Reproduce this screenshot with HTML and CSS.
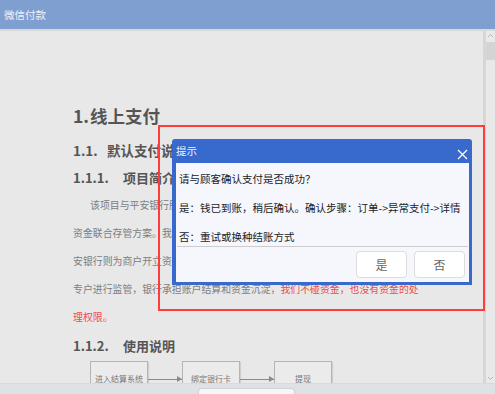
FILE: index.html
```html
<!DOCTYPE html>
<html lang="zh-CN">
<head>
  <meta charset="UTF-8">
  <meta name="viewport" content="width=device-width, initial-scale=1.0">
  <title>微信付款</title>
  <link rel="stylesheet" href="styles.css">
</head>
<body>
  <div class="topbar">微信付款</div>

  <!--DOCUMENT AREA-->
  <div class="main">
    <div class="content">
      <h1 class="title-1"><span class="num num-1">1.</span>线上支付</h1>
      <h2 class="title-2"><span class="num num-2">1.1.</span>默认支付说明</h2>
      <h3 class="title-3"><span class="num num-3">1.1.1.</span>项目简介</h3>
      <p class="para">
        <span class="indent">该项目与平安银行股份有限公司合作，采用平安银行提供的商户</span><br>
        资金联合存管方案。我们只负责与银行之间的接口对接与数据传输，平<br>
        安银行则为商户开立资金存管账户，商户资金存放在银行的资金存管<br>
        专户进行监管，银行承担账户结算和资金沉淀，<span class="warn">我们不碰资金，也没有资金的处</span><br>
        <span class="warn">理权限。</span>
      </p>
      <h3 class="title-3"><span class="num num-3">1.1.2.</span>使用说明</h3>

      <div class="flow">
        <div class="flow-box">进入结算系统</div>
        <div class="flow-arrow"></div>
        <div class="flow-box">绑定银行卡</div>
        <div class="flow-arrow"></div>
        <div class="flow-box">提现</div>
      </div>
    </div>

    <div class="scrollbar">
      <svg class="scroll-arrow" width="7" height="5" viewBox="0 0 7 5"><polyline points="1,4 3.5,1.5 6,4" fill="none" stroke="#b5b5b5" stroke-width="1"/></svg>
      <div class="scroll-thumb"></div>
      <div class="scroll-rest"></div>
      <svg class="scroll-arrow" width="7" height="5" viewBox="0 0 7 5"><polyline points="1,1 3.5,3.5 6,1" fill="none" stroke="#b5b5b5" stroke-width="1"/></svg>
    </div>
  </div>

  <div class="bottombar">
    <div class="bottom-tab"></div>
  </div>

  <!--RED HIGHLIGHT FRAME-->
  <div class="mark"></div>

  <!--CONFIRM DIALOG-->
  <div class="dialog">
    <div class="dialog-head">提示</div>
    <svg class="dialog-close" width="11" height="11" viewBox="0 0 11 11">
      <path d="M1 1 L10 10 M10 1 L1 10" stroke="#ffffff" stroke-width="1.3" fill="none"/>
    </svg>
    <div class="dialog-body">
      <div class="dialog-text">
        <p>请与顾客确认支付是否成功？</p>
        <p>是：钱已到账，稍后确认。确认步骤：订单-&gt;异常支付-&gt;详情</p>
        <p>否：重试或换种结账方式</p>
      </div>
      <div class="dialog-foot">
        <button class="dialog-btn">是</button>
        <button class="dialog-btn">否</button>
      </div>
    </div>
  </div>
</body>
</html>
```

FILE: styles.css
```css
body {
  margin: 0;
  width: 495px;
  height: 394px;
  overflow: hidden;
  position: relative;
  background-color: #e8e8e8;
  font-family: "Noto Sans CJK SC", "Noto Sans", sans-serif;
}
.topbar {
  height: 29px;
  line-height: 29px;
  padding-left: 4px;
  font-size: 10.5px;
  color: #eef1f8;
  background-color: #809fd1;
  border-bottom: 2px solid #d9d9d9;
}
.main {
  display: flex;
  height: 352px;
  overflow: hidden;
}
.content {
  flex: 1;
  padding: 72px 0 0 73px;
  background-color: #e8e8e8;
  border-right: 3px solid #d6d6d6;
}
.title-1 {
  margin: 0;
  font-size: 17.5px;
  line-height: 26px;
  color: #555555;
}
.title-2 {
  margin: 8px 0 0;
  font-size: 13.5px;
  line-height: 26px;
  color: #555555;
}
.title-3 {
  margin: 2px 0 0;
  font-size: 13px;
  line-height: 26px;
  color: #555555;
}
.num {
  display: inline-block;
}
.num-1 {
  width: 17px;
}
.num-2 {
  width: 34px;
}
.num-3 {
  width: 50px;
}
.para {
  margin: 0;
  font-size: 9.9px;
  line-height: 28px;
  color: #7d7d7d;
  white-space: nowrap;
}
.indent {
  padding-left: 17px;
}
.warn {
  color: #f0494b;
}
.flow {
  display: flex;
  align-items: flex-start;
  margin: 2px 0 0 17px;
}
.flow-box {
  width: 56px;
  height: 38px;
  line-height: 34px;
  text-align: center;
  font-size: 8px;
  color: #777777;
  background-color: #ebebeb;
  border: 1px solid #b4b4b4;
  box-shadow: 1px 1px 1px #cfcfcf;
}
.flow-arrow {
  position: relative;
  width: 34px;
  height: 1px;
  margin-top: 18px;
  background-color: #8a8a8a;
}
.flow-arrow::after {
  content: "";
  position: absolute;
  right: 0;
  top: -3px;
  border-left: 5px solid #8a8a8a;
  border-top: 3.5px solid transparent;
  border-bottom: 3.5px solid transparent;
}
.scrollbar {
  width: 9px;
  display: flex;
  flex-direction: column;
  align-items: center;
  background-color: #e9e9e9;
}
.scroll-arrow {
  margin: 2px 0;
}
.scroll-thumb {
  width: 9px;
  height: 18px;
  margin-top: 2px;
  background-color: #d4d4d4;
}
.scroll-rest {
  flex: 1;
}
.bottombar {
  height: 11px;
  background-color: #dfe2e5;
  border-top: 1px solid #d8dbde;
  box-sizing: border-box;
  padding: 4px 0 0 198px;
}
.bottom-tab {
  width: 95px;
  height: 8px;
  background-color: #f6f6f6;
  border: 1px solid #cfd2d5;
  border-bottom: none;
  border-radius: 4px 4px 0 0;
}
.mark {
  position: absolute;
  left: 158px;
  top: 125px;
  width: 323px;
  height: 182px;
  border: 2px solid #ff3b3b;
}
.dialog {
  position: absolute;
  left: 172px;
  top: 139px;
  width: 293px;
  padding: 0 3px 3px 4px;
  background-color: rgba(52, 103, 204, 0.98);
  border-radius: 3px 3px 0 0;
}
.dialog-head {
  height: 24px;
  line-height: 24px;
  font-size: 10.5px;
  color: #eef3ff;
}
.dialog-close {
  position: absolute;
  right: 4px;
  top: 10px;
}
.dialog-body {
  background-color: rgba(255, 255, 255, 0.95);
  padding: 0 1px;
}
.dialog-text {
  height: 84px;
  padding-left: 2px;
  box-sizing: border-box;
  padding-top: 6px;
  border-bottom: 1px solid #cccccc;
}
.dialog-text p {
  margin: 0 0 9px;
  font-size: 10.5px;
  line-height: 20px;
  color: #222222;
  white-space: nowrap;
}
.dialog-foot {
  display: flex;
  justify-content: flex-end;
  gap: 7px;
  padding: 4px 3px 4px 0;
}
.dialog-btn {
  width: 51px;
  height: 27px;
  padding: 0;
  font-family: "Noto Sans CJK SC", sans-serif;
  font-size: 12px;
  color: #666666;
  background-color: #ffffff;
  border: 1px solid #dddddd;
  border-radius: 4px;
  cursor: pointer;
}
```
